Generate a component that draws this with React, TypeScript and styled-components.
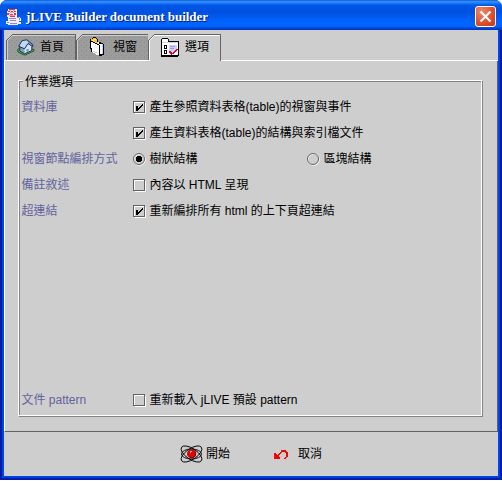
import React from 'react';
import styled, { createGlobalStyle, css } from 'styled-components';

const Global = createGlobalStyle`
  * { box-sizing: border-box; }
  body { margin: 0; background: #fff; }
  svg { display: block; flex: none; }
`;

const Window = styled.main`
  width: 502px;
  height: 480px;
  display: flex;
  flex-direction: column;
  border-radius: 7px 7px 0 0;
  overflow: hidden;
  background: #0033d8;
  font: 12px/16px 'Liberation Sans', 'Noto Sans CJK TC', sans-serif;
  color: #000;
`;

const TitleBar = styled.header`
  position: relative;
  z-index: 1;
  flex: 0 0 30px;
  display: flex;
  align-items: center;
  padding: 2px 6px 0;
  background: linear-gradient(#0040cc 0, #348fff 1px, #2480f8 3px, #0058e8 5px, #0050df 12px, #0060fb 20px, #0067ff 26px, #0048db 28px, #0034b8 30px);
`;

const Title = styled.h1`
  flex: 1;
  margin: 0 0 0 4px;
  padding-top: 1px;
  font: bold 13px/20px 'Liberation Serif', serif;
  letter-spacing: -0.03px;
  color: #fff;
  text-shadow: 1px 1px #002080;
  white-space: nowrap;
`;

const CloseButton = styled.button`
  width: 21px;
  height: 21px;
  padding: 0;
  display: grid;
  place-items: center;
  border: 1px solid #fff;
  border-radius: 3px;
  background: radial-gradient(circle at 30% 25%, #ee8a6c, #df5030 55%, #c63a10);
`;

const Client = styled.div`
  flex: 1;
  margin: 0 4px 4px;
  box-shadow: 0 0 0 1px #0048e8, 0 0 0 2px #0040e0, 0 0 0 4px #001ca8;
  display: flex;
  flex-direction: column;
  background: #cecece;
`;

const TabList = styled.nav`
  flex: 0 0 31px;
  display: flex;
  align-items: flex-end;
  padding-left: 2px;
  box-shadow: inset 0 -1px #fff;
`;

const Tab = styled.div<{ $width: number; $active?: boolean; $indent?: number; $gap?: number }>`
  position: relative;
  width: ${p => p.$width}px;
  height: 27px;
  display: flex;
  align-items: center;
  padding: 0 0 2px ${p => p.$indent ?? 10}px;
  gap: ${p => p.$gap ?? 5}px;
  border-top: 1px solid #636363;
  border-right: 1px solid #636363;
  box-shadow: inset 1px 0 #fff, inset 0 1px #fff;
  ${p => p.$active ? css`
    background: #cecece;
  ` : css`
    height: 26px;
    margin-bottom: 1px;
    padding-bottom: 1px;
    border-left: 1px solid #636363;
    box-shadow: inset 1px 0 #cecece, inset 0 1px #cecece;
    background-color: #9c9c9c;
    background-image: radial-gradient(circle, #8c8c8c 0.7px, transparent 1px), radial-gradient(circle, #8c8c8c 0.7px, transparent 1px);
    background-size: 5px 5px;
    background-position: 0 0, 2px 3px;
  `}
`;

const TabCorner = styled.svg`
  position: absolute;
  left: -1px;
  top: -1px;
`;

const Panel = styled.section`
  flex: 0 0 371px;
  padding: 13px 14px 14px 13px;
  border-left: 1px solid #fff;
  border-right: 1px solid #636363;
  border-bottom: 1px solid #636363;
`;

const Group = styled.section`
  display: flex;
  flex-direction: column;
  width: 464px;
  height: 336px;
  margin-top: 6px;
  padding-left: 2px;
  border: 1px solid #fff;
  box-shadow: inset 1px 1px #848484, 1px 1px #848484;
`;

const Legend = styled.h2`
  align-self: flex-start;
  height: 16px;
  margin: -7px 0 4px 2px;
  padding: 0 1px 0 2px;
  font: inherit;
  background: #cecece;
`;

const Row = styled.div<{ $last?: boolean }>`
  flex: 0 0 26px;
  display: grid;
  grid-template-columns: 112px 174px 1fr;
  align-items: center;
  white-space: nowrap;
  ${p => p.$last && css`margin: auto 0 2px;`}
`;

const Label = styled.span`
  padding-left: 0.5px;
  color: #63639c;
`;

const Choice = styled.label<{ $wide?: boolean }>`
  display: flex;
  align-items: center;
  gap: 2.5px;
  ${p => p.$wide && css`grid-column: 2 / 4;`}
`;

const Footer = styled.footer`
  flex: 1;
  display: flex;
  align-items: center;
  padding-left: 176px;
`;

const Action = styled.button<{ $gap: number; $width: number }>`
  width: ${p => p.$width}px;
  display: flex;
  align-items: center;
  gap: ${p => p.$gap}px;
  padding: 0;
  border: 0;
  background: none;
  font: inherit;
  color: inherit;
`;

function Check({ on }: { on?: boolean }) {
  return (
    <svg width="14" height="13" shapeRendering="crispEdges" fill="none">
      <path d="M1.5 12.5H12.5V1.5M1.5 11V1.5H11" stroke="#fff" />
      <path d="M.5 .5H11.5V11.5H.5Z" stroke="#636363" />
      {on && <path d="M3 5h2v2h1V6h1V5h1V4h1V3h1v2H9v1H8v1H7v1H6v1H5v1H3z" fill="#000" />}
    </svg>
  );
}

function Radio({ on }: { on?: boolean }) {
  return (
    <svg width="14" height="13" fill="none">
      <circle cx="6.7" cy="6.7" r="5.6" stroke="#fff" />
      <circle cx="6" cy="6" r="5.5" stroke="#636363" />
      {on && <path shapeRendering="crispEdges" d="M4 3h4v1h1v4H8v1H4V8H3V4h1z" fill="#000" />}
    </svg>
  );
}

function Corner({ active }: { active?: boolean }) {
  return (
    <TabCorner width="7" height="7" shapeRendering="crispEdges">
      <path d="M0 0h6L0 6z" fill="#cecece" />
      <path d="M0 6h1V5h1V4h1V3h1V2h1V1h1V0h1v1H6v1H5v1H4v1H3v1H2v1H1v1H0z" fill="#636363" />
      <path d="M1 6h1V5h1V4h1V3h1V2h1V1h1v1H6v1H5v1H4v1H3v1H2v1H1z" fill={active ? '#fff' : '#cecece'} />
    </TabCorner>
  );
}

function JavaIcon() {
  return (
    <svg width="16" height="17" viewBox="0 0 16 17" shapeRendering="crispEdges">
      <path d="M2 1h9v8h3v1h1v3h-2v1h2v2h-3v1H2v-1H0v-3h2V9H1V3h1z" fill="#eeeaf8" />
      <path d="M3 1h6v1H3zM2 3h2v1H2zM5 3h2v1H5zM8 3h2v1H8zM1 5h2v2H1zM4 6h3v1H4zM8 5h2v2H8zM4 8h5v1H4z" fill="#dd3c50" />
      <path d="M3 2h2v1H3zM7 2h2v1H7zM4 4h4v1H4zM3 5h1v1H3zM3 7h6v1H3z" fill="#f4a0aa" />
      <path d="M3 10h7v1H3zM11 9h2v1h-2zM13 10h1v2h-1zM4 12h6v1H4zM1 14h2v1H1zM4 15h7v1H4z" fill="#8f8abd" />
    </svg>
  );
}

function HouseIcon() {
  return (
    <svg width="18" height="17" viewBox="0 0 18 17">
      <path d="M.6 10.5L3 9l5 4 6-3 3 .5v1.4l-8.5 4H6.8L1 13z" fill="#6abd3c" stroke="#1f5a20" />
      <path d="M2.5 7.5l5 2.2v5L3 12.2z" fill="#7f9fc8" />
      <path d="M7.5 9.7L11 5l4 2v4.5l-7.5 3.2z" fill="#cfe2f4" />
      <path d="M5.2 1.6L10 .8l2 3-4.5 6L1.8 7z" fill="#c1d9ef" />
      <path d="M10 .8l5.8 4.8L14.5 7 11 4.2z" fill="#7e9fc9" />
      <path d="M1.8 7l3.4-5.4L10 .8l5.8 4.8v2L11 4.5 7.5 9.8 1.8 7.3v-.5M2.8 8v4.2l4.8 2.6 7.2-3.3V7.3" fill="none" stroke="#16335a" />
      <path d="M9.5 10h2.2v2.8l-2.2.8z" fill="#7797bd" />
    </svg>
  );
}

function FolderIcon() {
  return (
    <svg width="15" height="20" viewBox="0 0 15 20" shapeRendering="crispEdges">
      <path d="M1 4V2h2V1h3v1h2v3h2v1h3v2h1v10h-2v1H9v-1H6v-2H4v-2H2V9H1z" fill="#fff" />
      <path d="M1 4V2h2V1h3v1h1v3h1v2H6V6H4V5H1z" fill="#ffc61b" />
      <path d="M2 3h2V2h2v1H4v1H2z" fill="#fff277" />
      <path d="M11 7h2v11h-2z" fill="#ceceff" />
      <path d="M2 1h1V0h3v1h1v1h1v3H7V2H6V1H3v1H1v2h2v1h2v1h2v1h2v1h1v-1H9V5h2v1h2v1h1v11h-2v1H9v-1H7v-1H5v-1H3v-1H1v-3H0V2h2z" fill="#000" />
      <path d="M1 5h2v1h2v1h2v1h2v10H7v-1H5v-1H3v-1H2v-4H1zM10 7h2v10h-2z" fill="#fff" />
      <path d="M12 7h1v10h-1zM3 14h2v1h2v1H5v-1H3z" fill="#ceceff" />
    </svg>
  );
}

function OptionsIcon() {
  return (
    <svg width="18" height="19" viewBox="0 0 18 19" shapeRendering="crispEdges">
      <path d="M0 1h1V0h6v1h1v2h10v15h-1v1H0z" fill="#000" />
      <path d="M1 1h6v3h10v13H1z" fill="#fff" />
      <path d="M1 4h16v1H1zM8 7h8v7H8z" fill="#ceceff" />
      <path d="M3 7h3v4H3zM3 12h3v4H3z" fill="#000" />
      <path d="M4 8h1v2H4zM4 13h1v2H4z" fill="#fff" />
      <path d="M9 8h5v1H9zM9 10h4v1H9z" fill="#9c9ce7" />
      <path d="M8 13h2v1h1v1h1v-1h1v-1h1v-1h1v-1h2v1h-1v1h-1v1h-1v1h-1v1h-2v1h-1v-1H9v-1H8z" fill="#f00018" />
    </svg>
  );
}

function StartIcon() {
  return (
    <svg width="23" height="18" viewBox="0 0 23 18" fill="none">
      <g stroke="#000" strokeWidth=".9">
        <ellipse cx="11.5" cy="9" rx="10" ry="5" />
        <ellipse cx="11.5" cy="9" rx="12" ry="5.4" transform="rotate(34 11.5 9)" />
        <ellipse cx="11.5" cy="9" rx="12" ry="5.4" transform="rotate(-34 11.5 9)" />
      </g>
      <circle cx="11.7" cy="8.8" r="4.6" fill="#8c0000" />
      <circle cx="11.4" cy="8.4" r="3.7" fill="#df0808" />
      <path d="M10 6h2v1h-1v1h-1z" fill="#ff9c9c" />
    </svg>
  );
}

function CancelIcon() {
  return (
    <svg width="14" height="11" viewBox="0 0 14 11" shapeRendering="crispEdges">
      <path d="M0 4h2v1h1v1h1V5h1V4h1V3h1V2h1V1h4v1h1v1h1v5h-1v1h-1v1h-2V9h1V8h1V4h-1V3H8v1H7v1H6v1H5v2h1v2H0z" fill="#f00" />
      <path d="M7 1h1v1H7zM12 2h1v1h-1zM12 8h1v1h-1zM7 3h1v1H7z" fill="#ad5252" />
    </svg>
  );
}

export default function App() {
  return (
    <>
      <Global />
      <Window>
        <TitleBar>
          <JavaIcon />
          <Title>jLIVE Builder document builder</Title>
          <CloseButton aria-label="關閉">
            <svg width="13" height="13" viewBox="0 0 13 13"><path d="M1.5 1.5l10 10m0-10l-10 10" stroke="#fff" strokeWidth="2.2" /></svg>
          </CloseButton>
        </TitleBar>
        <Client>
          <TabList>
            <Tab $width={70}><Corner /><HouseIcon />首頁</Tab>
            <Tab $width={73} $indent={13} $gap={8}><Corner /><FolderIcon />視窗</Tab>
            <Tab $width={72} $indent={12} $gap={6} $active><Corner active /><OptionsIcon />選項</Tab>
          </TabList>
          <Panel>
            <Group>
              <Legend>作業選項</Legend>
              <Row>
                <Label>資料庫</Label>
                <Choice $wide><Check on />產生參照資料表格(table)的視窗與事件</Choice>
              </Row>
              <Row>
                <span />
                <Choice $wide><Check on />產生資料表格(table)的結構與索引檔文件</Choice>
              </Row>
              <Row>
                <Label>視窗節點編排方式</Label>
                <Choice><Radio on />樹狀結構</Choice>
                <Choice><Radio />區塊結構</Choice>
              </Row>
              <Row>
                <Label>備註敘述</Label>
                <Choice $wide><Check />內容以 HTML 呈現</Choice>
              </Row>
              <Row>
                <Label>超連結</Label>
                <Choice $wide><Check on />重新編排所有 html 的上下頁超連結</Choice>
              </Row>
              <Row $last>
                <Label>文件 pattern</Label>
                <Choice $wide><Check />重新載入 jLIVE 預設 pattern</Choice>
              </Row>
            </Group>
          </Panel>
          <Footer>
            <Action $gap={3} $width={94}><StartIcon />開始</Action>
            <Action $gap={10} $width={60}><CancelIcon />取消</Action>
          </Footer>
        </Client>
      </Window>
    </>
  );
}
